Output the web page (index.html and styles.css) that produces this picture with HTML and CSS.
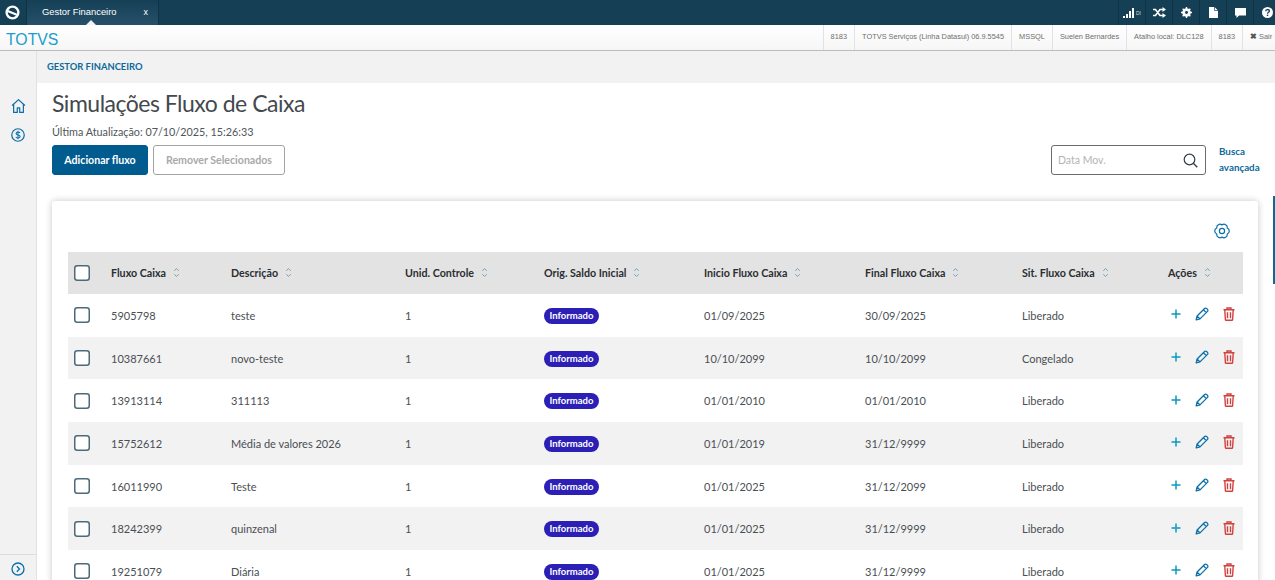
FILE: index.html
```html
<!DOCTYPE html>
<html lang="pt-BR">
<head>
<meta charset="utf-8">
<title>Gestor Financeiro</title>
<link rel="stylesheet" href="styles.css">
</head>
<body>
<svg class="defs" width="0" height="0" aria-hidden="true">
  <symbol id="sort" viewBox="0 0 8 12"><path d="M1.500 4 4 1.500 6.500 4M1.500 8 4 10.500 6.500 8" fill="none" stroke="#6f9cb8" stroke-width="1.100"/></symbol>
  <symbol id="plus" viewBox="0 0 12 12"><path d="M6 1.500v9M1.500 6h9" fill="none" stroke="#0c9abe" stroke-width="1.500"/></symbol>
  <symbol id="pencil" viewBox="0 0 14 14"><path d="M1.200 12.800l.9-3.800L9.600 1.500a1.400 1.400 0 0 1 2 0l.9.900a1.400 1.400 0 0 1 0 2L5 11.900zM2.100 9 5 11.900M8.400 2.700l2.900 2.900" fill="none" stroke="#0b6fa8" stroke-width="1.300" stroke-linejoin="round"/></symbol>
  <symbol id="trash" viewBox="0 0 12 14"><path d="M.5 2.800h11M4 2.500V1h4v1.500M1.800 3l.6 9.700c0 .4.300.6.700.6h5.800c.4 0 .7-.2.700-.6L10.200 3M4.500 5.200v6M7.500 5.200v6" fill="none" stroke="#d2423d" stroke-width="1.400"/></symbol>
  <symbol id="check" viewBox="0 0 16 16"><rect x=".75" y=".75" width="14.500" height="14.500" rx="2.500" fill="#fff" stroke="#4e6a78" stroke-width="1.500"/></symbol>
</svg>

<header class="topbar">
  <div class="logo-cell">
    <svg width="15" height="15" viewBox="0 0 14 14"><circle cx="7" cy="7" r="5.500" fill="none" stroke="#fff" stroke-width="2.200"/><path d="M2.500 5.500 11 9" stroke="#fff" stroke-width="2"/></svg>
  </div>
  <div class="tab"><span>Gestor Financeiro</span><span class="tab-x">x</span></div>
  <div class="tools">
    <div class="tool tool-signal">
      <svg width="11" height="10" viewBox="0 0 11 10"><path d="M0 8h2v2H0zM3 6h2v4H3zM6 3h2v7H6zM9 0h2v10H9z" fill="#fff"/></svg><span class="di">DI</span>
    </div>
    <div class="tool"><svg width="13" height="11" viewBox="0 0 13 11"><path d="M0 2.500h2.500L7 8.500h3M0 8.500h2.500L7 2.500h3" fill="none" stroke="#fff" stroke-width="1.700"/><path d="M9.500 0 13 2.500 9.500 5zM9.500 6 13 8.500 9.500 11z" fill="#fff"/></svg></div>
    <div class="tool"><svg width="11" height="11" viewBox="0 0 12 12"><circle cx="6" cy="6" r="3.500" fill="none" stroke="#fff" stroke-width="2.400"/><path d="M6 0v12M0 6h12M1.800 1.800l8.400 8.400M10.200 1.800l-8.400 8.400" stroke="#fff" stroke-width="1.500"/><circle cx="6" cy="6" r="1.600" fill="#143f55"/></svg></div>
    <div class="tool"><svg width="9" height="11" viewBox="0 0 9 11"><path d="M0 0h5.500L9 3.500V11H0z" fill="#fff"/><path d="M5.500 0v3.500H9" fill="none" stroke="#143f55" stroke-width=".7"/></svg></div>
    <div class="tool"><svg width="11" height="10" viewBox="0 0 11 10"><path d="M0 0h11v7.500H4L1.500 10V7.500H0z" fill="#fff"/></svg></div>
    <div class="tool"><svg width="11" height="11" viewBox="0 0 11 11"><circle cx="5.500" cy="5.500" r="5.500" fill="#fff"/><path d="M3.700 4.200c0-2.200 3.700-2.200 3.700-.2 0 1.300-1.900 1.300-1.900 2.700" fill="none" stroke="#143f55" stroke-width="1.300"/><path d="M4.800 7.600h1.400v1.400H4.800z" fill="#143f55"/></svg></div>
  </div>
</header>

<div class="infobar">
  <div class="brand">TOTVS</div>
  <ul class="info-list">
    <li>8183</li>
    <li>TOTVS Serviços (Linha Datasul) 06.9.5545</li>
    <li>MSSQL</li>
    <li>Suelen Bernardes</li>
    <li>Atalho local: DLC128</li>
    <li>8183</li>
    <li class="logout"><b>✖</b> Sair</li>
  </ul>
</div>

<div class="shell">
  <nav class="sidebar">
    <div class="side-icons">
      <svg width="15" height="16" viewBox="0 0 16 16"><path d="M1.200 7.500 8 1.200l6.800 6.300M2.800 6v8.800h3.900V10h2.600v4.800h3.900V6" fill="none" stroke="#0b6fa8" stroke-width="1.300" stroke-linejoin="round"/></svg>
      <svg width="14" height="14" viewBox="0 0 15 15"><circle cx="7.500" cy="7.500" r="6.700" fill="none" stroke="#0b6fa8" stroke-width="1.300"/><path d="M9.700 5.400c-.4-.8-1.200-1.100-2.200-1.100-1.200 0-2.100.6-2.100 1.600 0 2.200 4.400 1 4.400 3.300 0 1-1 1.600-2.300 1.600-1 0-1.900-.4-2.300-1.200M7.500 3v9" fill="none" stroke="#0b6fa8" stroke-width="1.100"/></svg>
    </div>
    <div class="side-foot">
      <svg width="14" height="14" viewBox="0 0 14 14"><circle cx="7" cy="7" r="6" fill="none" stroke="#0b6fa8" stroke-width="1.300"/><path d="M5.800 4.300 8.500 7l-2.700 2.700" fill="none" stroke="#0b6fa8" stroke-width="1.300"/></svg>
    </div>
  </nav>

  <main class="main">
    <div class="crumb">GESTOR FINANCEIRO</div>
    <div class="content">
      <h1 class="title">Simulações Fluxo de Caixa</h1>
      <p class="updated">Última Atualização: 07/10/2025, 15:26:33</p>
      <div class="actions">
        <button class="btn btn-primary">Adicionar fluxo</button>
        <button class="btn btn-disabled">Remover Selecionados</button>
        <div class="search">
          <span>Data Mov.</span>
          <svg width="15" height="15" viewBox="0 0 15 15"><circle cx="6.500" cy="6.500" r="5.300" fill="none" stroke="#2f3f48" stroke-width="1.200"/><path d="m10.300 10.300 4 4" stroke="#2f3f48" stroke-width="1.300"/></svg>
        </div>
        <a class="advanced">Busca<br>avançada</a>
      </div>

      <section class="card">
        <div class="card-top">
          <svg width="16" height="16" viewBox="0 0 16 16"><path d="M8 2A3.200 3.200 0 0 1 13.200 5 3.200 3.200 0 0 1 13.200 11 3.200 3.200 0 0 1 8 14 3.200 3.200 0 0 1 2.800 11 3.200 3.200 0 0 1 2.800 5 3.200 3.200 0 0 1 8 2z" fill="none" stroke="#0b6fa8" stroke-width="1.200" stroke-linejoin="round"/><circle cx="8" cy="8" r="2.600" fill="none" stroke="#0b6fa8" stroke-width="1.200"/></svg>
        </div>
        <div class="table">
          <div class="row head">
            <div class="cell"><svg class="check"><use href="#check"/></svg></div>
            <div class="cell">Fluxo Caixa<svg class="sort"><use href="#sort"/></svg></div>
            <div class="cell">Descrição<svg class="sort"><use href="#sort"/></svg></div>
            <div class="cell">Unid. Controle<svg class="sort"><use href="#sort"/></svg></div>
            <div class="cell">Orig. Saldo Inicial<svg class="sort"><use href="#sort"/></svg></div>
            <div class="cell">Inicio Fluxo Caixa<svg class="sort"><use href="#sort"/></svg></div>
            <div class="cell">Final Fluxo Caixa<svg class="sort"><use href="#sort"/></svg></div>
            <div class="cell">Sit. Fluxo Caixa<svg class="sort"><use href="#sort"/></svg></div>
            <div class="cell">Ações<svg class="sort"><use href="#sort"/></svg></div>
          </div>

          <div class="row">
            <div class="cell"><svg class="check"><use href="#check"/></svg></div>
            <div class="cell">5905798</div><div class="cell">teste</div><div class="cell">1</div>
            <div class="cell"><span class="tag">Informado</span></div>
            <div class="cell">01/09/2025</div><div class="cell">30/09/2025</div><div class="cell">Liberado</div>
            <div class="cell row-actions"><svg class="i-plus"><use href="#plus"/></svg><svg class="i-pen"><use href="#pencil"/></svg><svg class="i-trash"><use href="#trash"/></svg></div>
          </div>
          <div class="row">
            <div class="cell"><svg class="check"><use href="#check"/></svg></div>
            <div class="cell">10387661</div><div class="cell">novo-teste</div><div class="cell">1</div>
            <div class="cell"><span class="tag">Informado</span></div>
            <div class="cell">10/10/2099</div><div class="cell">10/10/2099</div><div class="cell">Congelado</div>
            <div class="cell row-actions"><svg class="i-plus"><use href="#plus"/></svg><svg class="i-pen"><use href="#pencil"/></svg><svg class="i-trash"><use href="#trash"/></svg></div>
          </div>
          <div class="row">
            <div class="cell"><svg class="check"><use href="#check"/></svg></div>
            <div class="cell">13913114</div><div class="cell">311113</div><div class="cell">1</div>
            <div class="cell"><span class="tag">Informado</span></div>
            <div class="cell">01/01/2010</div><div class="cell">01/01/2010</div><div class="cell">Liberado</div>
            <div class="cell row-actions"><svg class="i-plus"><use href="#plus"/></svg><svg class="i-pen"><use href="#pencil"/></svg><svg class="i-trash"><use href="#trash"/></svg></div>
          </div>
          <div class="row">
            <div class="cell"><svg class="check"><use href="#check"/></svg></div>
            <div class="cell">15752612</div><div class="cell">Média de valores 2026</div><div class="cell">1</div>
            <div class="cell"><span class="tag">Informado</span></div>
            <div class="cell">01/01/2019</div><div class="cell">31/12/9999</div><div class="cell">Liberado</div>
            <div class="cell row-actions"><svg class="i-plus"><use href="#plus"/></svg><svg class="i-pen"><use href="#pencil"/></svg><svg class="i-trash"><use href="#trash"/></svg></div>
          </div>
          <div class="row">
            <div class="cell"><svg class="check"><use href="#check"/></svg></div>
            <div class="cell">16011990</div><div class="cell">Teste</div><div class="cell">1</div>
            <div class="cell"><span class="tag">Informado</span></div>
            <div class="cell">01/01/2025</div><div class="cell">31/12/2099</div><div class="cell">Liberado</div>
            <div class="cell row-actions"><svg class="i-plus"><use href="#plus"/></svg><svg class="i-pen"><use href="#pencil"/></svg><svg class="i-trash"><use href="#trash"/></svg></div>
          </div>
          <div class="row">
            <div class="cell"><svg class="check"><use href="#check"/></svg></div>
            <div class="cell">18242399</div><div class="cell">quinzenal</div><div class="cell">1</div>
            <div class="cell"><span class="tag">Informado</span></div>
            <div class="cell">01/01/2025</div><div class="cell">31/12/9999</div><div class="cell">Liberado</div>
            <div class="cell row-actions"><svg class="i-plus"><use href="#plus"/></svg><svg class="i-pen"><use href="#pencil"/></svg><svg class="i-trash"><use href="#trash"/></svg></div>
          </div>
          <div class="row">
            <div class="cell"><svg class="check"><use href="#check"/></svg></div>
            <div class="cell">19251079</div><div class="cell">Diária</div><div class="cell">1</div>
            <div class="cell"><span class="tag">Informado</span></div>
            <div class="cell">01/01/2025</div><div class="cell">31/12/9999</div><div class="cell">Liberado</div>
            <div class="cell row-actions"><svg class="i-plus"><use href="#plus"/></svg><svg class="i-pen"><use href="#pencil"/></svg><svg class="i-trash"><use href="#trash"/></svg></div>
          </div>
        </div>
      </section>
    </div>
    <div class="edge-marker"></div>
  </main>
</div>
</body>
</html>
```
FILE: styles.css
```css
* { box-sizing: border-box; }
html, body { margin: 0; height: 580px; overflow: hidden; }
body { font-family: Lato, "Noto Sans", sans-serif; color: #3b4248; background: #fff; display: flex; flex-direction: column; }
.defs { position: absolute; }

.topbar { height: 25px; flex: none; background: #143f55; display: flex; color: #fff; }
.logo-cell { width: 26px; display: flex; align-items: center; justify-content: center; padding-right: 2px; }
.tab { width: 133px; display: flex; align-items: center; justify-content: space-between; padding: 0 10px 2px 15px; font: 9.400px "Liberation Sans", sans-serif; background: linear-gradient(#143f55, #27516a); border-right: 1px solid #0f3346; border-left: 1px solid #0f3346; position: relative; }
.tab::after { content: ""; position: absolute; left: 59px; bottom: 0; border: 5px solid transparent; border-top: 0; border-bottom-color: #f2f2f2; }
.tab-x { font-size: 9px; }
.tools { margin-left: auto; margin-right: -5px; display: flex; height: 25px; }
.tool { width: 27px; display: flex; align-items: center; justify-content: center; border-left: 1px solid #0f3346; }
.tool-signal { gap: 2px; }
.di { font: 5px "Liberation Sans", sans-serif; color: #c9d6dd; }

.infobar { height: 26px; flex: none; background: linear-gradient(#fff 0, #f6f6f6 100%); border-bottom: 1px solid #bdbdbd; display: flex; justify-content: space-between; }
.brand { font: 15.800px "Liberation Sans", sans-serif; color: #1b9ccf; padding: 6px 0 0 6px; }
.info-list { list-style: none; margin: 0; padding: 0; display: flex; font: 7.400px "Liberation Sans", sans-serif; color: #6f6f6f; }
.info-list li { padding: 0 7px; height: 25px; line-height: 23px; border-left: 1px solid #e2e2e2; white-space: nowrap; }
.info-list .logout { padding: 0 0 0 7px; width: 33px; }
.logout b { font-size: 8px; color: #555; }

.shell { flex: 1; display: flex; min-height: 0; }
.sidebar { width: 37px; flex: none; background: #f2f2f2; border-right: 1px solid #e2e2e2; display: flex; flex-direction: column; justify-content: space-between; }
.side-icons { display: flex; flex-direction: column; align-items: center; gap: 14px; padding: 47px 0 0 0; }
.side-foot { height: 26px; border-top: 1px solid #dcdcdc; display: flex; align-items: center; justify-content: center; padding: 2px 0 0 0; }

.main { flex: 1; min-width: 0; position: relative; }
.crumb { height: 32px; background: #f2f2f2; padding: 10px 0 0 10px; font-size: 9.400px; line-height: 12px; font-weight: 700; color: #0c6a9a; }
.content { padding: 5px 15px 0 15px; }
.title { margin: 0; font-size: 23px; line-height: 30px; font-weight: 400; color: #44494d; letter-spacing: -.5px; }
.updated { margin: 6px 0 0; font-size: 10.800px; line-height: 16px; color: #4f555a; }
.actions { margin-top: 5px; height: 30px; display: flex; align-items: center; gap: 5px; }
.btn { height: 30px; border-radius: 3px; font: 700 10.600px Lato, sans-serif; white-space: nowrap; padding: 0; }
.btn-primary { width: 96px; background: #005b8f; border: 1px solid #005b8f; color: #fff; }
.btn-disabled { width: 132px; background: #fff; border: 1px solid #a3a3a3; color: #a9a9a9; }
.search { margin-left: auto; width: 155px; height: 30px; border: 1px solid #6b6b6b; border-radius: 3px; display: flex; align-items: center; justify-content: space-between; padding: 0 7px 0 6px; font-size: 10.500px; color: #b3b3b3; }
.advanced { width: 41px; margin: -2px 0 0 8px; font-size: 9.800px; line-height: 16px; font-weight: 700; color: #0c6a9a; }

.card { margin-top: 26px; width: 1206px; background: #fff; border-radius: 3px; box-shadow: 0 0 7px rgba(0,0,0,.22); padding: 0 15px 0 16px; }
.card-top { height: 51px; display: flex; justify-content: flex-end; align-items: flex-start; padding: 22px 13px 0 0; }
.row { display: grid; grid-template-columns: 43px 120px 174px 139px 160px 161px 157px 146px 75px; height: 42.700px; align-items: center; font-size: 11px; color: #4a4f54; }
.row:nth-child(odd) { background: #f2f2f2; }
.row.head { background: #e3e3e3; height: 42px; font-weight: 700; font-size: 10.700px; color: #2a2e31; padding-bottom: 1px; }
.cell { display: flex; align-items: center; white-space: nowrap; }
.check { width: 16px; height: 16px; margin-left: 6px; }
.sort { width: 7px; height: 11px; margin-left: 7px; }
.tag { width: 55px; height: 16px; margin-top: 1px; border-radius: 8px; background: #2b1fb5; color: #fff; font-size: 9.500px; font-weight: 700; line-height: 16px; text-align: center; }
.row-actions { margin-top: -2px; }
.i-plus { width: 12px; height: 12px; margin-left: 2px; }
.i-pen { width: 14px; height: 14px; margin-left: 13px; }
.i-trash { width: 12px; height: 14px; margin-left: 14px; }
.edge-marker { position: absolute; right: 0; top: 145px; width: 2px; height: 88px; background: #0c6a9a; }
```
